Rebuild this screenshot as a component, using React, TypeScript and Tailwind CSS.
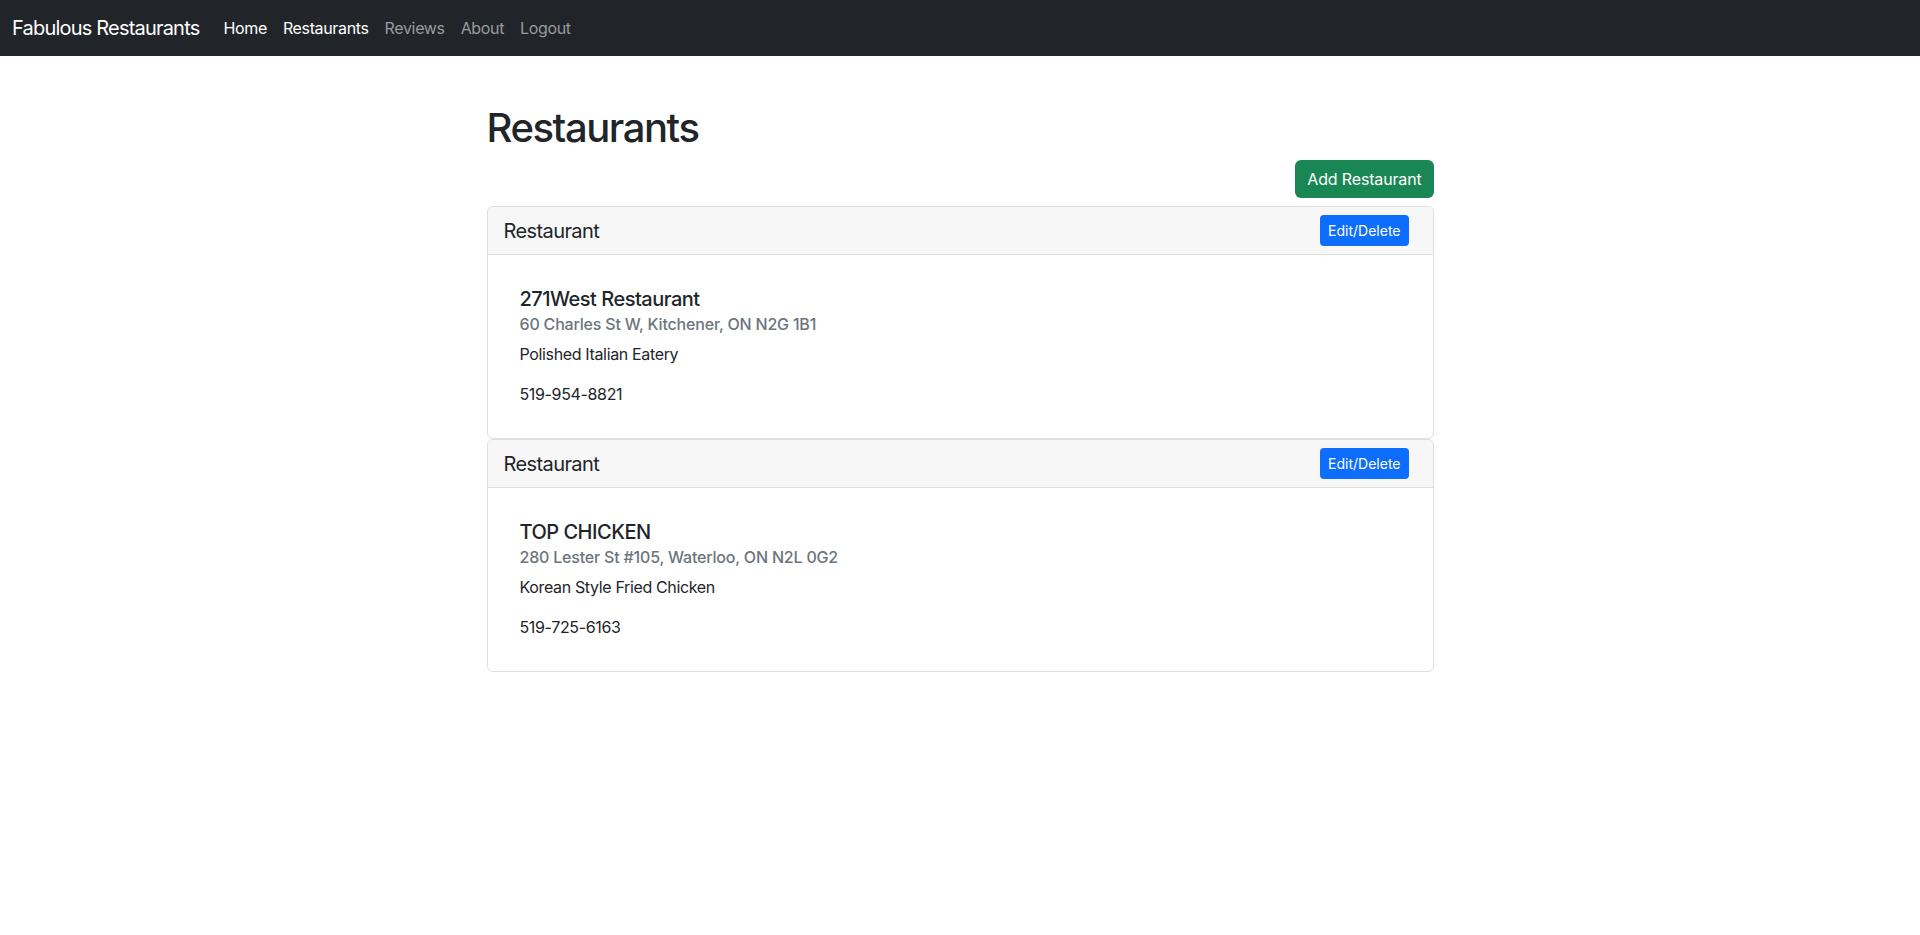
import React from 'react';

const RESTAURANTS = [
  {
    id: 1,
    name: '271West Restaurant',
    address: '60 Charles St W, Kitchener, ON N2G 1B1',
    description: 'Polished Italian Eatery',
    phone: '519-954-8821',
  },
  {
    id: 2,
    name: 'TOP CHICKEN',
    address: '280 Lester St #105, Waterloo, ON N2L 0G2',
    description: 'Korean Style Fried Chicken',
    phone: '519-725-6163',
  },
];

const NAV_LINKS = [
  { label: 'Home', active: true },
  { label: 'Restaurants', active: true },
  { label: 'Reviews', active: false },
  { label: 'About', active: false },
  { label: 'Logout', active: false },
];

function RestaurantCard({ restaurant }: { restaurant: (typeof RESTAURANTS)[number] }) {
  return (
    <div className="border border-[#dfdfdf] rounded-[6px] bg-white">
      {/* Card header */}
      <div className="flex items-center justify-between py-2 px-4 bg-[#f7f7f7] border-b border-[#dfdfdf] rounded-t-[5px]">
        <span className="text-[20px] leading-[1.2] tracking-[-0.03em] text-[#212529]">Restaurant</span>
        <button className="mr-2 h-[31px] px-2 text-[14px] leading-[1.5] tracking-[0em] text-white bg-[#0d6efd] rounded-[4px]">
          Edit/Delete
        </button>
      </div>

      {/* Card body */}
      <div className="p-4">
        <div className="p-4">
          <h5 className="text-[20px] leading-[1.2] tracking-[-0.025em] font-medium text-[#212529] mb-2">{restaurant.name}</h5>
          <h6 className="text-[16px] leading-[1.2] tracking-[-0.012em] font-medium text-[#6c757d] -mt-1 mb-2">{restaurant.address}</h6>
          <p className="text-[16px] leading-[1.5] text-[#212529] mb-4">{restaurant.description}</p>
          <p className="text-[16px] leading-[1.5] text-[#212529]">{restaurant.phone}</p>
        </div>
      </div>
    </div>
  );
}

export default function App() {
  return (
    <div className="min-h-screen bg-white text-[#212529] tracking-[-0.022em] font-['Inter','Noto_Sans',sans-serif]">
      {/* --- Navbar --- */}
      <nav className="h-14 bg-[#212529] flex items-center px-3">
        <span className="text-[20px] tracking-[-0.04em] text-white mr-4">Fabulous Restaurants</span>
        <ul className="flex items-center">
          {NAV_LINKS.map((link) => (
            <li key={link.label}>
              <a
                href="#"
                className={`block px-2 py-2 text-[16px] leading-[1.5] ${
                  link.active ? 'text-white' : 'text-[#9a9b9d]'
                }`}
              >
                {link.label}
              </a>
            </li>
          ))}
        </ul>
      </nav>

      {/* --- Main content --- */}
      <main className="w-[947px] mx-auto mt-12">
        <h1 className="text-[40px] leading-[1.2] tracking-[-0.036em] font-medium mb-2">Restaurants</h1>
        <div className="flex justify-end my-2">
          <button className="h-[38px] px-3 text-[16px] leading-[1.5] tracking-[-0.01em] text-white bg-[#198754] rounded-[6px]">
            Add Restaurant
          </button>
        </div>
        <div className="flex flex-col">
          {RESTAURANTS.map((r) => (
            <RestaurantCard key={r.id} restaurant={r} />
          ))}
        </div>
      </main>
    </div>
  );
}
